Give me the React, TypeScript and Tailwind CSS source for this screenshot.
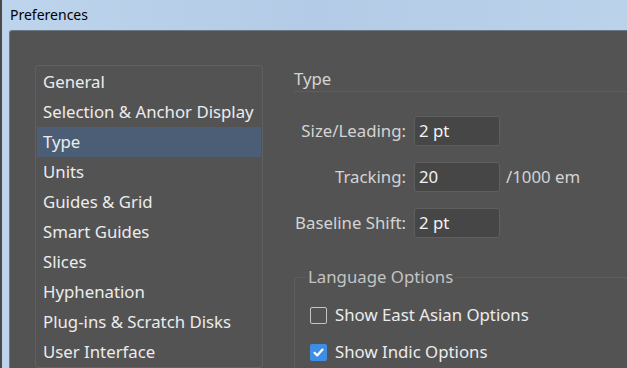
const categories = [
  'General',
  'Selection & Anchor Display',
  'Type',
  'Units',
  'Guides & Grid',
  'Smart Guides',
  'Slices',
  'Hyphenation',
  'Plug-ins & Scratch Disks',
  'User Interface',
];

function Field({ label, value, suffix }: { label: string; value: string; suffix?: string }) {
  return (
    <div className="flex items-center h-[30px]">
      <span className="w-[113px] text-right text-[16.8px] text-[#d4d4d4] pr-px whitespace-nowrap">{label}</span>
      <div className="ml-[7px] w-[86px] h-[30px] rounded-[3px] border border-[#5f5f5f] bg-[#464646] flex items-center pl-[4px] text-[16.8px] text-[#f2f2f2]">
        {value}
      </div>
      {suffix && <span className="ml-[6px] text-[16.8px] text-[#d4d4d4]">{suffix}</span>}
    </div>
  );
}

function Checkbox({ checked, label }: { checked?: boolean; label: string }) {
  return (
    <div className="flex items-center h-[30px]">
      {checked ? (
        <div className="w-[17px] h-[17px] rounded-[2px] bg-[#3f8ee6] flex items-center justify-center">
          <svg width="13" height="13" viewBox="0 0 13 13" fill="none">
            <path d="M2.5 6.8 L5.2 9.4 L10.5 3.6" stroke="#ffffff" strokeWidth="2.2" strokeLinecap="round" strokeLinejoin="round" />
          </svg>
        </div>
      ) : (
        <div className="w-[17px] h-[17px] rounded-[2px] border-[1.5px] border-[#c4c4c4]" />
      )}
      <span className="ml-[8px] text-[16.8px] text-[#ececec]">{label}</span>
    </div>
  );
}

export default function App() {
  return (
    <div
      className="w-[627px] h-[368px] overflow-hidden flex flex-col bg-gradient-to-r from-[#bdd4ec] via-[#b3cbe6] to-[#bad2ea] border-l-2 border-[#4a4a4a]"
      style={{ fontFamily: '"Noto Sans", "Open Sans", sans-serif' }}
    >
      <div className="h-[30px] flex items-center pl-[8px] pb-px text-[14px] text-black shrink-0">Preferences</div>
      <div className="flex-1 flex pl-[7px] min-h-0">
        <div className="flex-1 bg-[#535353] rounded-tl-[3px] border-t border-l border-[#6b7783] flex pl-[25px] pt-[34px] min-h-0">
          <div className="w-[228px] shrink-0 rounded-[3px] border border-[#606060] px-px pt-px">
            {categories.map((c) => (
              <div
                key={c}
                className={
                  'h-[30px] flex items-center pl-[6px] text-[16.8px] text-[#ececec] whitespace-nowrap ' +
                  (c === 'Type' ? 'bg-[#4b5e75]' : '')
                }
              >
                {c}
              </div>
            ))}
          </div>
          <div className="flex-1 ml-[31px] min-w-0">
            <div className="h-[27px] border-b border-[#5e5e5e] text-[16.8px] text-[#d4d4d4] leading-[26px] pt-[1px]">Type</div>
            <div className="pt-[24px] flex flex-col gap-[16px]">
              <Field label="Size/Leading:" value="2 pt" />
              <Field label="Tracking:" value="20" suffix="/1000 em" />
              <Field label="Baseline Shift:" value="2 pt" />
            </div>
            <div className="mt-[39px] rounded-tl-[4px] border-t border-l border-[#5e5e5e] pl-[15px] h-[120px]">
              <div className="-mt-[13px] w-fit bg-[#535353] px-[2px] -ml-[4px] text-[16.8px] text-[#c4c4c4] leading-[24px]">
                Language Options
              </div>
              <div className="mt-[11px] flex flex-col gap-[7px]">
                <Checkbox label="Show East Asian Options" />
                <Checkbox checked label="Show Indic Options" />
              </div>
            </div>
          </div>
        </div>
      </div>
    </div>
  );
}
